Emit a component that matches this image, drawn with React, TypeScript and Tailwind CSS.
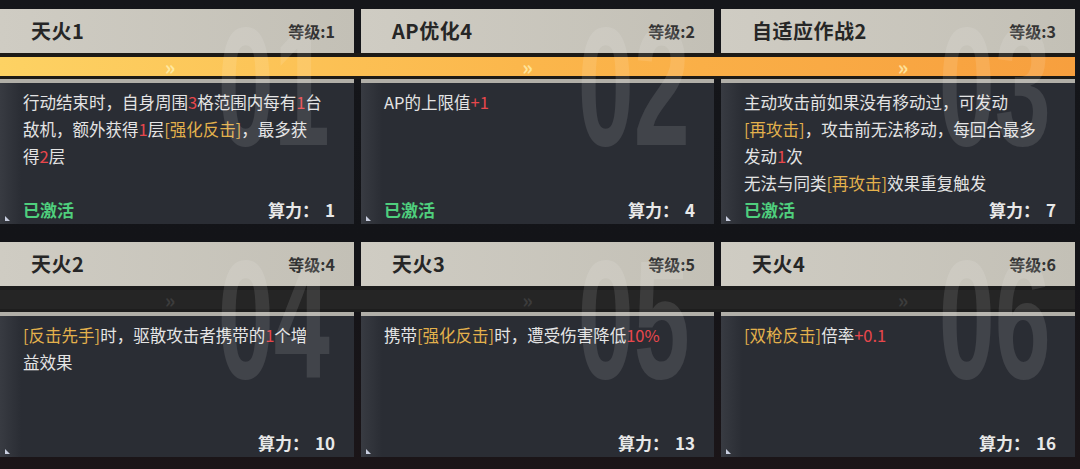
import React from "react";

type Card = {
  title: string;
  lv: number;
  num: string;
  power: number;
  lines: string[];
};

const rows: { active: boolean; cards: Card[] }[] = [
  {
    active: true,
    cards: [
      {
        title: "天火1",
        lv: 1,
        num: "01",
        power: 1,
        lines: ["行动结束时，自身周围{3}格范围内每有{1}台", "敌机，额外获得{1}层[强化反击]，最多获", "得{2}层"],
      },
      { title: "AP优化4", lv: 2, num: "02", power: 4, lines: ["AP的上限值{+1}"] },
      {
        title: "自适应作战2",
        lv: 3,
        num: "03",
        power: 7,
        lines: [
          "主动攻击前如果没有移动过，可发动",
          "[再攻击]，攻击前无法移动，每回合最多",
          "发动{1}次",
          "无法与同类[再攻击]效果重复触发",
        ],
      },
    ],
  },
  {
    active: false,
    cards: [
      { title: "天火2", lv: 4, num: "04", power: 10, lines: ["[反击先手]时，驱散攻击者携带的{1}个增", "益效果"] },
      { title: "天火3", lv: 5, num: "05", power: 13, lines: ["携带[强化反击]时，遭受伤害降低{10%}"] },
      { title: "天火4", lv: 6, num: "06", power: 16, lines: ["[双枪反击]倍率{+0.1}"] },
    ],
  },
];

const colStart = ["col-start-1", "col-start-2", "col-start-3"];

// {x} = red value, [x] = yellow keyword
function Line({ text }: { text: string }) {
  const parts = text.split(/(\{[^}]+\}|\[[^\]]+\])/).filter(Boolean);
  return (
    <div className="whitespace-nowrap">
      {parts.map((p, i) =>
        p.startsWith("{") ? (
          <span key={i} className="text-[#e8474c]">{p.slice(1, -1)}</span>
        ) : p.startsWith("[") ? (
          <span key={i} className="text-[#e3b14c]">{p}</span>
        ) : (
          <span key={i}>{p}</span>
        )
      )}
    </div>
  );
}

function Corner() {
  return (
    <svg className="absolute bottom-[3px] left-[5px]" width="5" height="5" viewBox="0 0 5 5">
      <path d="M0 0 L0 5 L5 5 Z" fill="#c9cfe0" />
    </svg>
  );
}

function Row({ active, cards }: { active: boolean; cards: Card[] }) {
  return (
    <div className="grid grid-cols-[354px_353px_354px] grid-rows-[44px_26px_145px] gap-x-[7px]">
      {cards.map((c, i) => (
        <div
          key={c.title}
          className={`${colStart[i]} row-start-1 flex items-center justify-between bg-gradient-to-r from-[#cfccc3] to-[#c3c0b6] pl-[31px] pr-[19px]`}
        >
          <span className="text-[20px] font-bold tracking-[0.5px] text-[#262626]">{c.title}</span>
          <span className="text-[16px] font-semibold text-[#333]">等级:{c.lv}</span>
        </div>
      ))}

      <div className={`col-start-1 col-span-3 row-start-2 pb-[3px] pt-[4px] ${active ? "bg-[#1c1a17]" : "bg-[#1d1d1d]"}`}>
        <div
          className={`grid h-full grid-cols-[354px_353px_354px] gap-x-[7px] ${
            active ? "bg-gradient-to-r from-[#fdd263] via-[#fbb64b] to-[#f79f3e]" : "bg-[#252525]"
          }`}
        >
          {cards.map((c, i) => (
            <div
              key={c.num}
              className={`flex items-center justify-center text-[20px] font-bold leading-none ${
                active ? "text-[#fff3b5]/75" : "text-[#3c3c3c]"
              } ${i === 0 ? "pr-[14px]" : i === 1 ? "pr-[20px]" : "pl-[10px]"}`}
            >
              »
            </div>
          ))}
        </div>
      </div>

      {cards.map((c, i) => (
        <div
          key={c.num + "b"}
          className={`${colStart[i]} relative row-start-3 flex flex-col border-t-4 border-[#b1afa8] bg-gradient-to-r from-[#383b42] from-0% to-[#2a2d34] to-[6%]`}
        >
          <div className="flex-1 pl-[23px] pt-[6px] text-[16.5px] leading-[27px] text-[#e4e4e4]">
            {c.lines.map((l) => (
              <Line key={l} text={l} />
            ))}
          </div>
          <div className="flex items-center justify-between pb-[4px] pl-[23px] pr-[19px] text-[17px] font-bold leading-[20px]">
            <span className="text-[#4fcf7d]">{active ? "已激活" : ""}</span>
            <span className="text-[#e8e8e8]">
              算力：<span className="ml-[6px]">{c.power}</span>
            </span>
          </div>
          <Corner />
        </div>
      ))}

      {cards.map((c, i) => (
        <div
          key={c.num + "n"}
          className={`${colStart[i]} pointer-events-none row-span-3 row-start-1 flex items-start justify-end overflow-hidden`}
        >
          <span className="mr-[24px] -mt-[6px] origin-top-right scale-x-[0.6] text-[168px] font-bold leading-none text-white/[0.11] [font-family:'Liberation_Sans',sans-serif]">
            {c.num}
          </span>
        </div>
      ))}
    </div>
  );
}

export default function App() {
  return (
    <div
      className="flex h-[469px] w-[1080px] flex-col gap-[18px] overflow-hidden bg-gradient-to-b from-[#15161a] via-[#131418] to-[#1b1518] pt-[9px]"
      style={{ fontFamily: "'Noto Sans CJK SC', 'Noto Sans', sans-serif" }}
    >
      {rows.map((r, i) => (
        <Row key={i} active={r.active} cards={r.cards} />
      ))}
    </div>
  );
}
